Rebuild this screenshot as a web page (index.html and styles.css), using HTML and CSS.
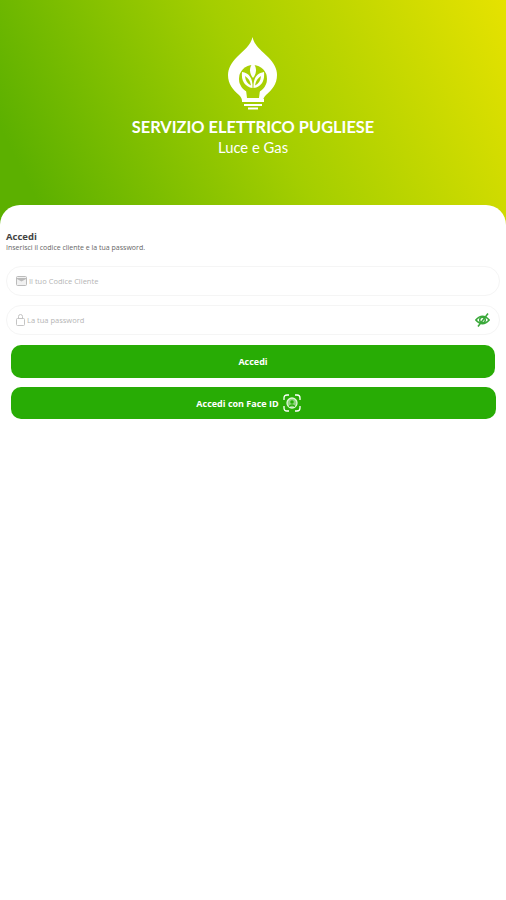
FILE: index.html
```html
<!DOCTYPE html>
<html>
<head>
    <title>Servizio Elettrico Pugliese</title>
    <link rel="stylesheet" href="styles.css">
</head>
<body>
    <header class="hero">
        <svg class="logo" width="50" height="73" viewBox="0 0 50 73">
            <!-- goccia / lampadina -->
            <path fill="#fff" d="M24.500 0 C26 8 33 13 40 20 C46 26 49 32 49 38 C49 47 44 53 38 58 C36 60 35 62 35 64 L14 64 C14 62 13 60 11 58 C5 53 0 47 0 38 C0 32 3 26 9 20 C16 13 23 8 24.500 0 Z"/>
            <circle cx="25" cy="42" r="14" fill="#a9d004"/>
            <path fill="#a9d004" d="M18 53 H32 L31 61 H19 Z"/>
            <!-- foglie -->
            <path fill="#fff" d="M25 26 C29 30 29 36 25 41 C21 36 21 30 25 26 Z"/>
            <path fill="#fff" d="M14 35 C21 36 25 41 24.500 51 C17 50 13 44 14 35 Z"/>
            <path fill="#fff" d="M36 35 C29 36 25 41 25.500 51 C33 50 37 44 36 35 Z"/>
            <path fill="#a9d004" d="M17 39 C20 41 22.500 44 23 48.500 C19.500 47 17.500 44 17 39 Z"/>
            <path fill="#a9d004" d="M33 39 C30 41 27.500 44 27 48.500 C30.500 47 32.500 44 33 39 Z"/>
            <!-- attacco -->
            <path fill="#fff" d="M14 62 H36 V65 H14 Z"/>
            <path fill="#fff" d="M16 67 H34 V69 H16 Z"/>
            <path fill="#fff" d="M20 70.500 H30 V72.500 H20 Z"/>
        </svg>
        <h1 class="brand">SERVIZIO ELETTRICO PUGLIESE</h1>
        <p class="brand-sub">Luce e Gas</p>
    </header>

    <main class="card">
        <h2 class="card-title">Accedi</h2>
        <p class="card-text">Inserisci il codice cliente e la tua password.</p>

        <div class="field field-first">
            <svg class="field-icon" width="11" height="10" viewBox="0 0 11 10">
                <rect x="0.500" y="0.500" width="10" height="9" rx="1" fill="#f1f1f1" stroke="#bbb"/>
                <path d="M1 2 H10 V3 L5.500 5.500 L1 3 Z" fill="#bbb"/>
            </svg>
            <span>Il tuo Codice Cliente</span>
        </div>

        <div class="field">
            <svg class="field-icon" width="9" height="12" viewBox="0 0 9 12">
                <rect x="0.500" y="4.500" width="8" height="7" rx="1" fill="none" stroke="#c4c4c4"/>
                <path d="M2.500 4.500 V2.500 Q2.500 0.500 4.500 0.500 Q6.500 0.500 6.500 2.500 V4.500" fill="none" stroke="#c4c4c4"/>
            </svg>
            <span>La tua password</span>
            <svg class="eye" width="15" height="14" viewBox="0 0 15 14">
                <path d="M0.800 7 Q7.500 -0.500 14.200 7 Q7.500 14.500 0.800 7 Z" fill="none" stroke="#3aa83a" stroke-width="1.500"/>
                <circle cx="7.500" cy="7" r="2.800" fill="none" stroke="#3aa83a" stroke-width="1.500"/>
                <path d="M3 13.500 L13 0.500" stroke="#3aa83a" stroke-width="1.500"/>
            </svg>
        </div>

        <button type="button" class="btn btn-main">Accedi</button>
        <button type="button" class="btn btn-face">
            Accedi con Face ID
            <svg width="18" height="18" viewBox="0 0 18 18" fill="none" stroke="#fff" stroke-width="1.300">
                <path d="M1 6 V4 Q1 1 4 1 H6 M12 1 H14 Q17 1 17 4 V6 M17 12 V14 Q17 17 14 17 H12 M6 17 H4 Q1 17 1 14 V12"/>
                <circle cx="9" cy="9" r="5" fill="#8fd67e" stroke="#dff5d8"/>
                <circle cx="9" cy="8" r="1.800" fill="#28ac05" stroke="none"/>
                <path d="M6 12.500 Q9 9.500 12 12.500" stroke="#28ac05"/>
            </svg>
        </button>
    </main>
</body>
</html>
```

FILE: styles.css
```css
html, body {
    margin: 0;
    padding: 0;
}

body {
    width: 506px;
    height: 900px;
    overflow: hidden;
    background-color: #fff;
    font-family: "Open Sans", "Liberation Sans", sans-serif;
}

.hero {
    height: 225px;
    padding-top: 37px;
    box-sizing: border-box;
    background: linear-gradient(63deg, #5cb000 8%, #a4ce00 52%, #e6e200 100%);
    text-align: center;
    color: #fff;
}

.logo {
    display: block;
    margin: 0 auto;
}

.brand {
    margin: 7px 0 0 0;
    font-family: "Lato", sans-serif;
    font-size: 16.400px;
    font-weight: 700;
    line-height: 20px;
    letter-spacing: 0;
}

.brand-sub {
    margin: 1px 0 0 0;
    font-family: "Lato", sans-serif;
    font-size: 14.800px;
    line-height: 18px;
}

.card {
    margin-top: -20px;
    height: 695px;
    padding: 26px 6px 0 6px;
    box-sizing: border-box;
    background-color: #fff;
    border-radius: 20px 20px 0 0;
}

.card-title {
    margin: 0;
    font-size: 9.500px;
    font-weight: 700;
    line-height: 11px;
    color: #444;
}

.card-text {
    margin: 2px 0 0 0;
    font-size: 7px;
    line-height: 8px;
    color: #666;
}

.field {
    display: flex;
    align-items: center;
    gap: 2px;
    height: 30px;
    width: 494px;
    margin-bottom: 9px;
    padding: 0 9px;
    box-sizing: border-box;
    border: 1px solid #f5f5f5;
    border-radius: 15px;
    font-size: 7.500px;
    color: #b5b5b5;
}

.field-first {
    margin-top: 14px;
}

.eye {
    margin-left: auto;
}

.btn {
    display: flex;
    align-items: center;
    justify-content: center;
    gap: 4px;
    margin-left: 5px;
    border: none;
    background-color: #28ac05;
    color: #fff;
    font-family: "Open Sans", sans-serif;
    font-size: 9px;
    font-weight: 700;
}

.btn-main {
    width: 484px;
    height: 33px;
    margin-top: 10px;
    border-radius: 10px;
}

.btn-face {
    width: 485px;
    height: 32px;
    margin-top: 9px;
    padding-right: 16px;
    border-radius: 10px;
}
```
